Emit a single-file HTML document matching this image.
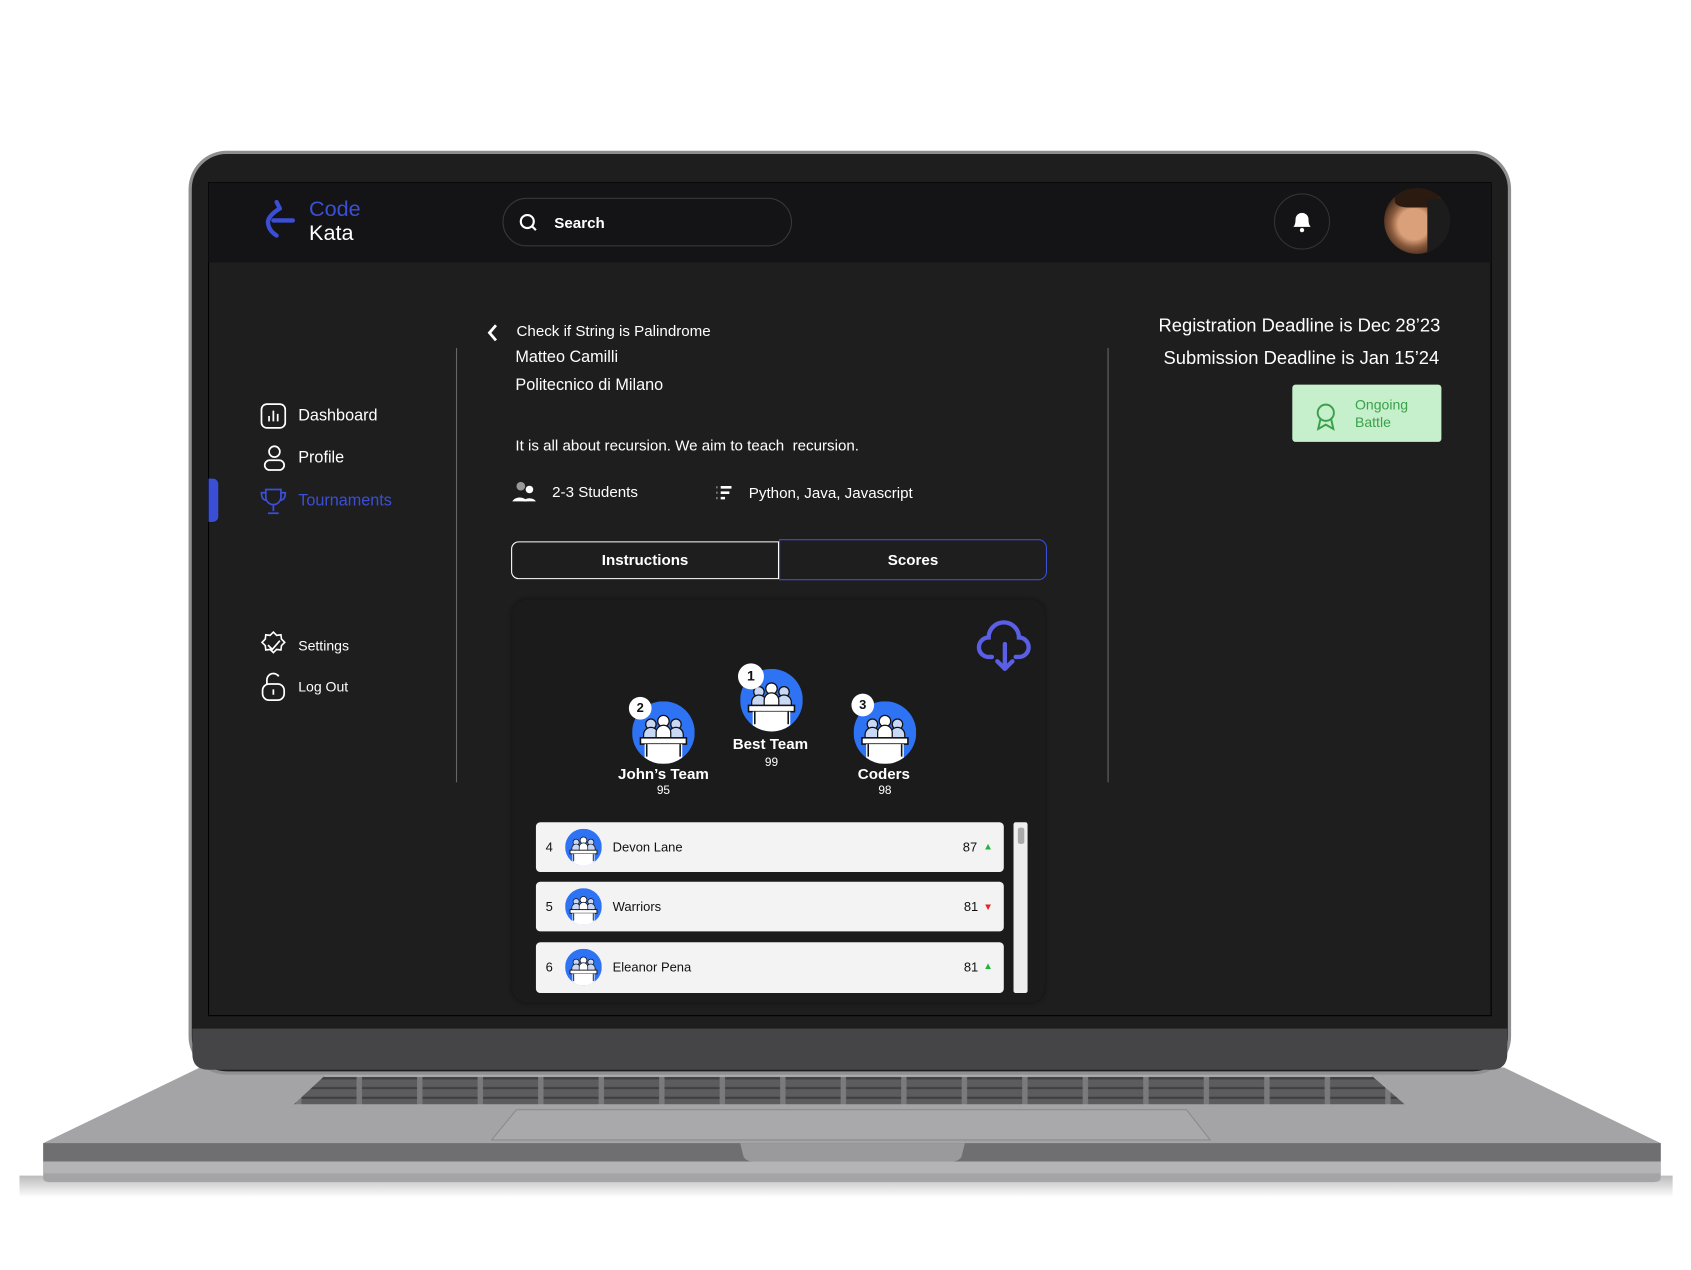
<!DOCTYPE html>
<html><head><meta charset="utf-8">
<style>
*{margin:0;padding:0;box-sizing:border-box}
html,body{width:1691px;height:1269px;overflow:hidden;background:#fff;font-family:"Liberation Sans",sans-serif}
#w{position:absolute;left:0;top:0;width:1565px;height:1175px;transform:scale(1.08051);transform-origin:0 0}
.a{position:absolute}
.t{position:absolute;color:#fff;white-space:nowrap}
.row{position:absolute;left:496px;width:433px;height:46px;background:#f3f3f3;border-radius:4px;color:#111;font-size:12px}
.row span{position:absolute;top:16px}
</style></head><body>
<div id="w">
<svg class="a" style="left:0;top:0" width="1565" height="1175">
<defs>
<linearGradient id="sh" x1="0" y1="0" x2="0" y2="1"><stop offset="0" stop-color="#bbb"/><stop offset="1" stop-color="#fff"/></linearGradient>
<pattern id="keys" width="56" height="9" patternUnits="userSpaceOnUse"><rect width="56" height="9" fill="#5c5c5e"/><rect x="0" y="7" width="56" height="2" fill="#404042"/><rect x="50" y="0" width="5" height="9" fill="#7a7a7c"/></pattern>
<symbol id="team" viewBox="0 0 60 60">
<circle cx="30" cy="30" r="30" fill="#2f73f5"/>
<circle cx="18" cy="22" r="5" fill="#c8d8f5" stroke="#111" stroke-width="1.2"/>
<circle cx="42" cy="22" r="5" fill="#c8d8f5" stroke="#111" stroke-width="1.2"/>
<path d="M11 36v-4a7 7 0 0 1 14 0v4zM35 36v-4a7 7 0 0 1 14 0v4z" fill="#c8d8f5" stroke="#111" stroke-width="1.2"/>
<circle cx="30" cy="19" r="5.5" fill="#fff" stroke="#111" stroke-width="1.2"/>
<path d="M23 36v-6a7 7 0 0 1 14 0v6z" fill="#fff" stroke="#111" stroke-width="1.2"/>
<rect x="8" y="35" width="44" height="6" fill="#fff" stroke="#111" stroke-width="1.5"/>
<path d="M12 41h36v13a30 30 0 0 1-36 0z" fill="#fff"/>
<path d="M14 41v12M46 41v12" stroke="#111" stroke-width="1.5"/>
</symbol>
</defs>
<rect x="18" y="1088" width="1530" height="20" fill="url(#sh)"/>
<path d="M185 988 L1392 988 L1537 1058 L1537 1090 Q1537 1094 1530 1094 L46 1094 Q40 1094 40 1090 L40 1058 Z" fill="#a4a4a6"/>
<path d="M40 1058 L1537 1058 L1537 1075 L40 1075Z" fill="#6f6f71"/>
<path d="M40 1075 L1537 1075 L1537 1086 L40 1086Z" fill="#b4b4b6"/>
<path d="M685 1058 L893 1058 L890 1070 Q888 1075 880 1075 L698 1075 Q690 1075 688 1070Z" fill="#9a9a9c"/>
<path d="M300 996 L1270 996 L1300 1022 L272 1022 Z" fill="url(#keys)"/>
<path d="M300 996 L1270 996" stroke="#bbb" stroke-width="1"/>
<path d="M478 1027 L1098 1027 L1120 1055 L455 1055 Z" fill="#a9a9ab" stroke="#8a8a8c" stroke-width="1"/>
<rect x="176" y="141" width="1221" height="852" rx="34" fill="#1e1e1e" stroke="#8f8f91" stroke-width="3"/>
<path d="M178 952 H1395 V975 Q1395 990 1380 990 H193 Q178 990 178 975Z" fill="#454547"/>
<rect x="193" y="169" width="1187" height="771" fill="#1e1e1e" stroke="#000" stroke-width="1"/>
<rect x="193" y="169" width="1187" height="74" fill="#141416"/>
</svg>

<svg class="a" style="left:243px;top:184px" width="32" height="38" viewBox="0 0 32 38"><path d="M13 3 L16 9 M16 9 Q6 15 5 21 Q5 29 13 34 M10 20 H28" fill="none" stroke="#3a4fd6" stroke-width="4" stroke-linecap="round" stroke-linejoin="round"/></svg>
<div class="t" style="left:286px;top:183px;font-size:20px;color:#3a4fd6">Code</div>
<div class="t" style="left:286px;top:205px;font-size:20px">Kata</div>
<div class="a" style="left:465px;top:183px;width:268px;height:45px;border:1.5px solid #38383b;border-radius:23px"></div>
<svg class="a" style="left:480px;top:197px" width="18" height="18"><circle cx="8" cy="8" r="6" fill="none" stroke="#fff" stroke-width="2"/><path d="M12.5 12.5L16 16" stroke="#fff" stroke-width="2"/></svg>
<div class="t" style="left:513px;top:198px;font-size:14px;font-weight:bold">Search</div>
<div class="a" style="left:1179px;top:179px;width:52px;height:52px;border:1.5px solid #333;border-radius:50%"></div>
<svg class="a" style="left:1194px;top:193px" width="22" height="24"><path d="M3 17 Q5 15 5 10 A6 6 0 0 1 17 10 Q17 15 19 17Z" fill="#fff"/><circle cx="11" cy="20" r="2" fill="#fff"/></svg>
<div class="a" style="left:1281px;top:174px;width:61px;height:61px;border-radius:50%;background:radial-gradient(circle at 45% 55%,#d9a07a 0 30%,#8a5a3c 45%,#2a1a12 70%,#c9a24a 100%);overflow:hidden">
<div class="a" style="left:10px;top:0;width:40px;height:18px;background:#2a1a10;border-radius:50% 50% 30% 30%"></div>
<div class="a" style="left:40px;top:10px;width:25px;height:55px;background:#1c1c1c"></div>
</div>

<svg class="a" style="left:241px;top:373px" width="24" height="24"><rect x="1" y="1" width="22" height="22" rx="5" fill="none" stroke="#fff" stroke-width="1.6"/><path d="M8 17v-5M12 17V7M16 17v-7" stroke="#fff" stroke-width="1.6"/></svg>
<div class="t" style="left:276px;top:376px;font-size:15px">Dashboard</div>
<svg class="a" style="left:243px;top:411px" width="22" height="26"><circle cx="11" cy="7" r="5" fill="none" stroke="#fff" stroke-width="1.6"/><rect x="2" y="15" width="18" height="9" rx="4.5" fill="none" stroke="#fff" stroke-width="1.6"/></svg>
<div class="t" style="left:276px;top:415px;font-size:15px">Profile</div>
<div class="a" style="left:193px;top:443px;width:9px;height:40px;background:#3a4fd6;border-radius:0 5px 5px 0"></div>
<svg class="a" style="left:239px;top:450px" width="28" height="28"><path d="M7 3h14v7a7 7 0 0 1-14 0z M7 6H3q0 7 5 7 M21 6h4q0 7-5 7 M14 17v6 M9 25h10" fill="none" stroke="#3a4fd6" stroke-width="1.6"/></svg>
<div class="t" style="left:276px;top:455px;font-size:15px;color:#3a4fd6">Tournaments</div>
<svg class="a" style="left:239px;top:583px" width="28" height="28"><path d="M14 2l3 3 4-.5.5 4 3 3-3 3-.5 4-4-.5-3 3-3-3-4 .5-.5-4-3-3 3-3 .5-4 4 .5z" fill="none" stroke="#fff" stroke-width="1.5"/><path d="M9 14l4 4 7-8" fill="none" stroke="#fff" stroke-width="1.6"/></svg>
<div class="t" style="left:276px;top:590px;font-size:13px">Settings</div>
<svg class="a" style="left:241px;top:622px" width="24" height="28"><path d="M6 11V7a6 6 0 0 1 11-3" fill="none" stroke="#fff" stroke-width="1.6"/><rect x="2" y="11" width="20" height="15" rx="6" fill="none" stroke="#fff" stroke-width="1.6"/><path d="M12 16v5" stroke="#fff" stroke-width="1.6"/></svg>
<div class="t" style="left:276px;top:628px;font-size:13px">Log Out</div>

<div class="a" style="left:422px;top:322px;width:1px;height:402px;background:#666"></div>
<div class="a" style="left:1025px;top:322px;width:1px;height:402px;background:#666"></div>

<svg class="a" style="left:450px;top:299px" width="12" height="18"><path d="M9 2L3 9l6 7" fill="none" stroke="#fff" stroke-width="2.6"/></svg>
<div class="t" style="left:478px;top:298px;font-size:14px">Check if String is Palindrome</div>
<div class="t" style="left:477px;top:322px;font-size:15px">Matteo Camilli</div>
<div class="t" style="left:477px;top:348px;font-size:15px">Politecnico di Milano</div>
<div class="t" style="left:477px;top:404px;font-size:14px">It is all about recursion. We aim to teach &nbsp;recursion.</div>
<svg class="a" style="left:473px;top:445px" width="24" height="20"><circle cx="9" cy="5" r="4" fill="#999"/><circle cx="17" cy="8" r="3.5" fill="#fff"/><path d="M1 19a8 7 0 0 1 14 0z" fill="#fff"/><path d="M11 19a7 6 0 0 1 12 0z" fill="#fff"/></svg>
<div class="t" style="left:511px;top:447px;font-size:14px">2-3 Students</div>
<svg class="a" style="left:662px;top:449px" width="16" height="16"><path d="M5 2h10M5 7h8M5 12h4" stroke="#fff" stroke-width="2.4"/><path d="M1 2h1M1 7h1M1 12h1" stroke="#aaa" stroke-width="2"/></svg>
<div class="t" style="left:693px;top:448px;font-size:14px">Python, Java, Javascript</div>

<div class="a" style="left:473px;top:501px;width:248px;height:35px;border:1.3px solid #fff;border-radius:7px 0 0 7px"></div>
<div class="t" style="left:473px;top:510px;width:248px;text-align:center;font-size:14px;font-weight:bold">Instructions</div>
<div class="a" style="left:721px;top:499px;width:248px;height:38px;border:1.5px solid #3a4fd6;border-radius:0 8px 8px 0"></div>
<div class="t" style="left:721px;top:510px;width:248px;text-align:center;font-size:14px;font-weight:bold">Scores</div>

<div class="a" style="left:474px;top:555px;width:493px;height:373px;background:#1b1b1b;border-radius:14px;box-shadow:0 0 4px #111"></div>
<svg class="a" style="left:903px;top:571px" width="54" height="54"><path d="M15 37h-3a9 9 0 0 1 0-18 14 14 0 0 1 28 0 9 9 0 0 1 0 18h-3" fill="none" stroke="#5b5fe6" stroke-width="4" stroke-linecap="round"/><path d="M27 25v23M20 41l7 7 7-7" fill="none" stroke="#5b5fe6" stroke-width="4" stroke-linecap="round" stroke-linejoin="round"/></svg>

<svg class="a" style="left:585px;top:649px" width="58" height="58"><use href="#team"/></svg>
<svg class="a" style="left:685px;top:619px" width="58" height="58"><use href="#team"/></svg>
<svg class="a" style="left:790px;top:649px" width="58" height="58"><use href="#team"/></svg>
<div class="t" style="left:582px;top:645px;width:21px;height:21px;border-radius:50%;background:#fff;color:#111;font-size:12px;font-weight:bold;text-align:center;line-height:21px">2</div>
<div class="t" style="left:683px;top:614px;width:24px;height:24px;border-radius:50%;background:#fff;color:#111;font-size:13px;font-weight:bold;text-align:center;line-height:24px">1</div>
<div class="t" style="left:788px;top:642px;width:21px;height:21px;border-radius:50%;background:#fff;color:#111;font-size:12px;font-weight:bold;text-align:center;line-height:21px">3</div>
<div class="t" style="left:554px;top:708px;width:120px;text-align:center;font-size:14px;font-weight:bold">John’s Team</div>
<div class="t" style="left:554px;top:726px;width:120px;text-align:center;font-size:11px">95</div>
<div class="t" style="left:653px;top:680px;width:120px;text-align:center;font-size:14px;font-weight:bold">Best Team</div>
<div class="t" style="left:654px;top:700px;width:120px;text-align:center;font-size:11px">99</div>
<div class="t" style="left:758px;top:708px;width:120px;text-align:center;font-size:14px;font-weight:bold">Coders</div>
<div class="t" style="left:759px;top:726px;width:120px;text-align:center;font-size:11px">98</div>

<div class="row" style="top:761px"><span style="left:9px">4</span><svg class="a" style="left:27px;top:6px" width="34" height="34"><use href="#team"/></svg><span style="left:71px">Devon Lane</span><span style="left:395px">87</span><span style="left:414px;color:#22b33a;font-size:9px;top:17px">▲</span></div>
<div class="row" style="top:816px"><span style="left:9px">5</span><svg class="a" style="left:27px;top:6px" width="34" height="34"><use href="#team"/></svg><span style="left:71px">Warriors</span><span style="left:396px">81</span><span style="left:414px;color:#e22;font-size:9px;top:18px">▼</span></div>
<div class="row" style="top:872px;height:47px"><span style="left:9px">6</span><svg class="a" style="left:27px;top:6px" width="34" height="34"><use href="#team"/></svg><span style="left:71px">Eleanor Pena</span><span style="left:396px">81</span><span style="left:414px;color:#22b33a;font-size:9px;top:17px">▲</span></div>
<div class="a" style="left:938px;top:761px;width:13px;height:158px;background:#eee;border-radius:2px"></div>
<div class="a" style="left:942px;top:766px;width:6px;height:15px;background:#aaa;border-radius:2px"></div>

<div class="t" style="left:1000px;top:292px;width:333px;text-align:right;font-size:17px">Registration Deadline is Dec 28’23</div>
<div class="t" style="left:1000px;top:322px;width:332px;text-align:right;font-size:17px">Submission Deadline is Jan 15’24</div>
<div class="a" style="left:1196px;top:356px;width:138px;height:53px;background:#c6efcb;border-radius:3px"></div>
<svg class="a" style="left:1215px;top:372px" width="24" height="28"><circle cx="12" cy="10" r="7.5" fill="none" stroke="#3aa14a" stroke-width="1.8"/><path d="M7 16l-2 9 7-4 7 4-2-9" fill="none" stroke="#3aa14a" stroke-width="1.8"/></svg>
<div class="t" style="left:1254px;top:367px;font-size:13px;color:#3aa14a;line-height:16px">Ongoing<br>Battle</div>
</div>
</body></html>
